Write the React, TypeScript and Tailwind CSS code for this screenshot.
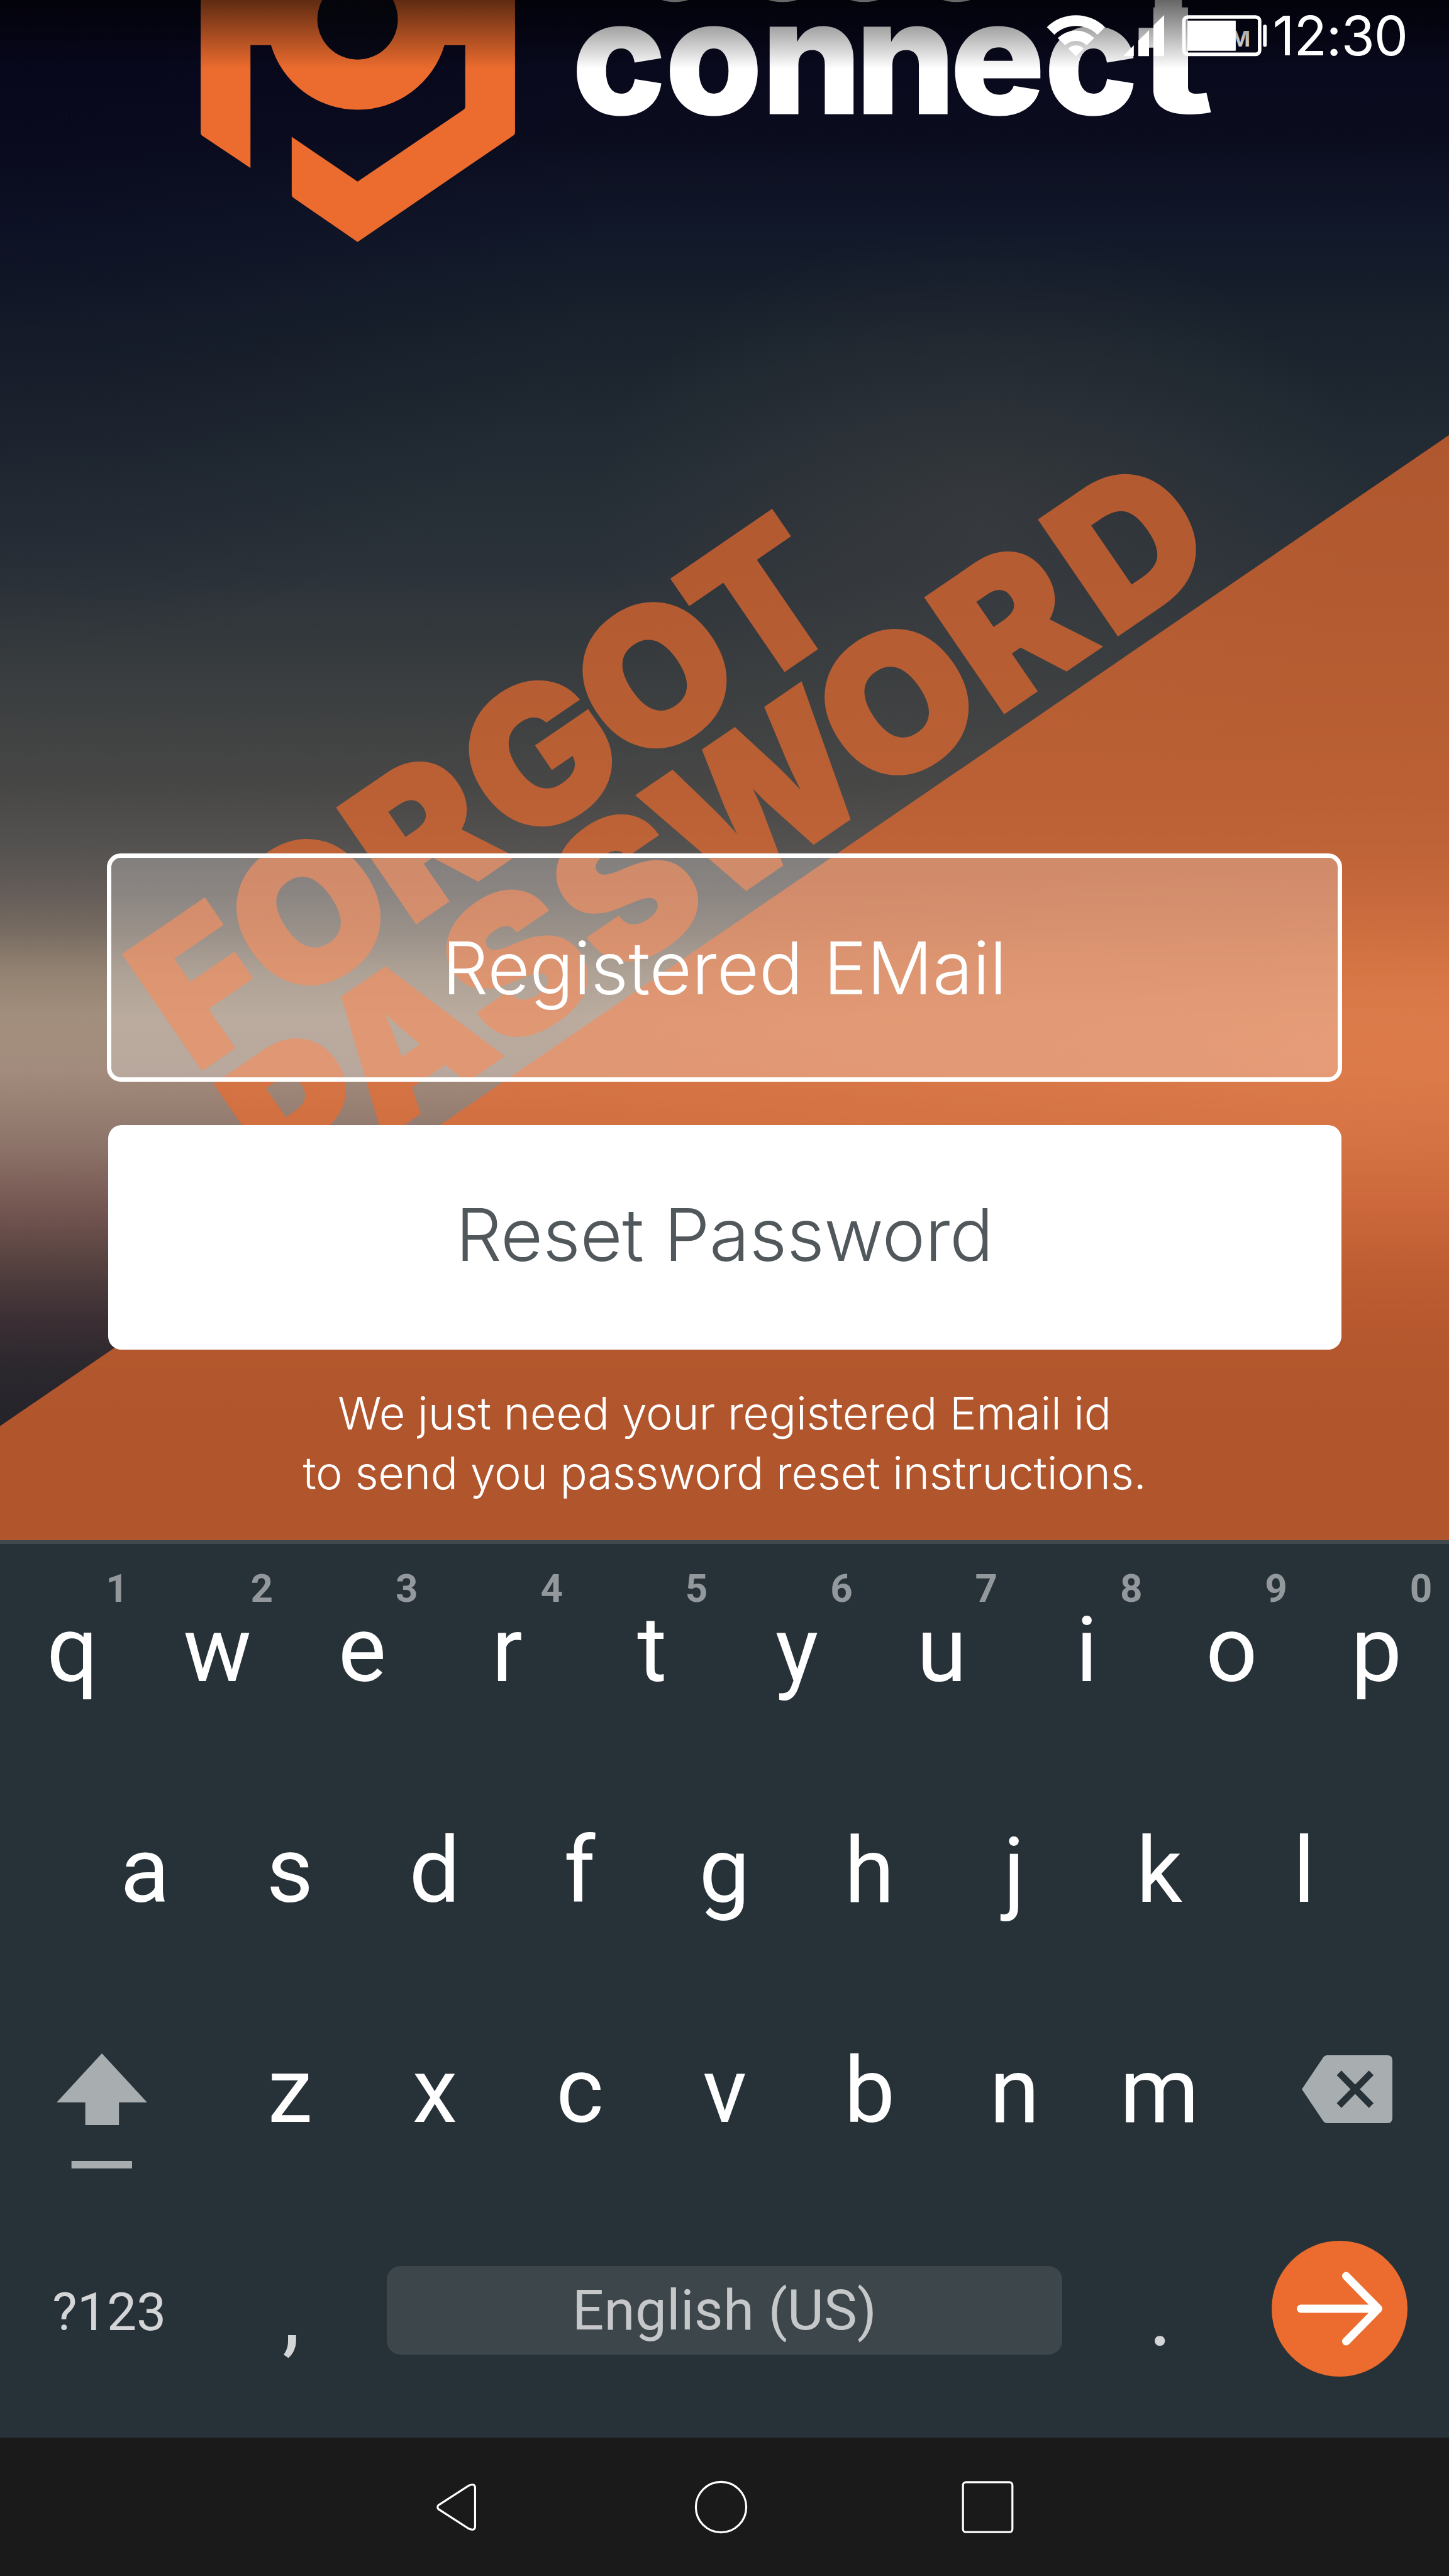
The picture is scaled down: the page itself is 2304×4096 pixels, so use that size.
import type { ReactNode } from "react";

const TOP_ROW: [string, string][] = [
  ["q", "1"], ["w", "2"], ["e", "3"], ["r", "4"], ["t", "5"],
  ["y", "6"], ["u", "7"], ["i", "8"], ["o", "9"], ["p", "0"],
];
const MIDDLE_ROW = ["a", "s", "d", "f", "g", "h", "j", "k", "l"];
const BOTTOM_ROW = ["z", "x", "c", "v", "b", "n", "m"];

function Backdrop() {
  return (
    <div className="absolute inset-0 overflow-hidden">
      <div className="absolute inset-0 bg-[linear-gradient(180deg,#06061a_0%,#0b0d1f_9%,#111829_15%,#1a232d_22%,#232c34_30%,#2b3239_37%,#393d3f_44%,#474746_51%,#545250_55%,#655d59_58%,#786c62_60.5%,#928171_63%,#a38f7e_66%,#a28b7c_69.500%,#8f766b_74%,#745651_78.5%,#564240_82%,#3c2f34_85.5%,#2a272d_89%,#24232a_93%,#25252b_100%)]" />
      <div className="absolute inset-0 bg-[radial-gradient(ellipse_620px_460px_at_1560px_820px,rgba(88,80,76,0.3),rgba(88,80,76,0)_100%)]" />
      <div className="absolute inset-0 bg-[radial-gradient(ellipse_1300px_330px_at_2150px_1690px,rgba(235,215,190,0.27),rgba(235,215,190,0)_100%)]" />
      <div className="absolute inset-0 bg-[radial-gradient(ellipse_1000px_800px_at_0px_250px,rgba(6,4,28,0.4),rgba(6,4,28,0)_100%)]" />
      <svg viewBox="0 0 2881 3062" className="absolute inset-0 h-full w-full" preserveAspectRatio="none">
        <g fill="#ec6b2e" opacity="0.7" fontFamily="Inter" fontWeight="900" fontSize="379">
          <path d="M2881 865V3062H0V2835Z" />
          <g stroke="#ec6b2e" strokeWidth="6">
            <text transform="translate(402.5 2125) rotate(-34.4)">
              <tspan x="-18">F</tspan>
              <tspan x="350" textAnchor="middle">O</tspan>
              <tspan x="498">R</tspan>
              <tspan x="905" textAnchor="middle">G</tspan>
              <tspan x="1184" textAnchor="middle">O</tspan>
              <tspan x="1441" textAnchor="middle">T</tspan>
            </text>
            <text transform="translate(585 2383) rotate(-34.4)">
              <tspan x="-18">P</tspan>
              <tspan x="359" textAnchor="middle">A</tspan>
              <tspan x="627" textAnchor="middle">S</tspan>
              <tspan x="892" textAnchor="middle">S</tspan>
              <tspan x="1213" textAnchor="middle">W</tspan>
              <tspan x="1546" textAnchor="middle">O</tspan>
              <tspan x="1694">R</tspan>
              <tspan x="1968">D</tspan>
            </text>
          </g>
        </g>
        <path fill="#ec6b2e" d="M399 0H1024V264Q1024 267 1021 269L711 481L583 393Q580 391 580 388V272L711 361L922 218Q925 216 925 212V89.8H883.7A180 180 0 0 1 538.8 89.8H498V334L401 269Q399 267 399 264Z" />
        <circle cx="711" cy="38.4" r="80" fill="#090918" />
        <g fill="#fff">
          <text y="225" x="1138 1323 1515 1702 1890 2077" fontFamily="Inter" fontWeight="800" fontSize="311" stroke="#fff" strokeWidth="4">connec</text>
          <text transform="translate(2260 225) scale(1.3 1)" fontFamily="Inter" fontWeight="800" fontSize="311">t</text>
          <rect x="2296" y="0" width="54" height="60" />
          <ellipse cx="1342" cy="-16" rx="44" ry="20" />
          <ellipse cx="1556" cy="-16" rx="48" ry="20" />
          <ellipse cx="1718" cy="-16" rx="46" ry="20" />
          <ellipse cx="1902" cy="-16" rx="46" ry="20" />
          <text x="2486" y="93" textAnchor="end" fontFamily="Inter" fontWeight="700" fontSize="43">TM</text>
        </g>
      </svg>
      <div className="absolute inset-x-0 top-0 h-[109px] bg-linear-to-b from-black/60 to-black/0" />
    </div>
  );
}

function StatusBar() {
  return (
    <div className="relative flex h-[110px] items-start justify-end pr-[66px] text-white">
      <svg viewBox="2070 20 456 102" className="mr-[2px] mt-[16px] h-[81.6px] w-[364.7px] shrink-0" fill="#fff">
        <path d="M2079.500 54A82 82 0 0 1 2195 54L2180 69A61 61 0 0 0 2094.500 69Z" />
        <path d="M2101 75.500A52 52 0 0 1 2173.600 75.500L2158.500 90A30 30 0 0 0 2116 90Z" />
        <path d="M2122 96.500A22 22 0 0 1 2152.500 96.500L2137.300 111.500Z" />
        <path d="M2231.500 111.500L2252.300 90V111.500Z" />
        <path d="M2261.300 111.500V81L2282.600 60V111.500Z" />
        <path d="M2291.300 111.500V51L2312.600 30V111.500Z" />
        <rect x="2352" y="33.700" width="150.500" height="74.300" rx="8" fill="none" stroke="#fff" strokeWidth="7" />
        <rect x="2359" y="41" width="96" height="60" rx="1" />
        <rect x="2509.300" y="49" width="7.300" height="44" rx="3.600" />
      </svg>
      <span className="mt-[5px] text-[86px] leading-[104px] tracking-[-1px]">12:30</span>
    </div>
  );
}

function Key({ children, hint }: { children: ReactNode; hint?: string }) {
  return (
    <div className="relative flex w-[230.4px] shrink-0 justify-center text-[144px] leading-[168px] text-white">
      {hint && (
        <span className="absolute left-[161px] top-[-50px] w-[50px] text-center text-[62px] font-bold leading-[72px] text-[#93989c]">
          {hint}
        </span>
      )}
      {children}
    </div>
  );
}

function Keyboard() {
  return (
    <div className="flex h-[1427px] flex-col border-t-[6px] border-[#3f494d] bg-[#273238] font-['Roboto']">
      <div className="flex h-[351px] pt-[85px]">
        {TOP_ROW.map(([letter, digit]) => (
          <Key key={letter} hint={digit}>{letter}</Key>
        ))}
      </div>
      <div className="flex h-[351px] justify-center pt-[85px]">
        {MIDDLE_ROW.map((letter) => (
          <Key key={letter}>{letter}</Key>
        ))}
      </div>
      <div className="flex h-[351px] pt-[84px]">
        <div className="w-[346px] shrink-0 pl-[90px]">
          <svg viewBox="113 4082 180 229" className="mt-[24px] h-[183px] w-[144px]" fill="#a8adb0">
            <path d="M203 4082L293 4179.500H237V4224.500H170V4179.500H113Z" />
            <rect x="142.500" y="4296" width="120.500" height="15" />
          </svg>
        </div>
        {BOTTOM_ROW.map((letter) => (
          <Key key={letter}>{letter}</Key>
        ))}
        <svg viewBox="2588 4086 180 135" className="ml-[111px] mt-[27px] h-[108px] w-[144px] shrink-0">
          <path d="M2588 4153.500L2630 4091Q2633 4086 2639 4086H2758Q2768 4086 2768 4096V4211Q2768 4221 2758 4221H2639Q2633 4221 2630 4216Z" fill="#a8adb0" />
          <path d="M2662 4121L2726 4186M2726 4121L2662 4186" stroke="#273238" strokeWidth="13" />
        </svg>
      </div>
      <div className="flex h-[368px] text-[#d4d5d7]">
        <span className="ml-[83px] mt-[119px] w-[346px] shrink-0 text-[84px] leading-[100px]">?123</span>
        <span className="mt-[88px] w-[186px] shrink-0 pl-[20px] text-[144px] leading-[168px]">,</span>
        <div className="mt-[95px] flex h-[141px] w-[1074px] shrink-0 items-center justify-center rounded-[22px] bg-[#3c464b] text-[89px] leading-[100px] tracking-[0.2px] text-[#c5c7c9]">
          English (US)
        </div>
        <span className="mt-[88px] w-[333px] shrink-0 pl-[137px] text-[144px] leading-[168px]">.</span>
        <svg viewBox="2528 4455 270 270" className="mt-[55px] h-[216px] w-[216px] shrink-0">
          <circle cx="2663" cy="4590" r="135" fill="#ec6b2e" />
          <path d="M2586 4590H2738M2676 4525L2740 4590L2676 4655" fill="none" stroke="#fff" strokeWidth="16" strokeLinecap="round" strokeLinejoin="round" />
        </svg>
      </div>
    </div>
  );
}

function NavigationBar() {
  return (
    <div className="flex h-[220px] items-center bg-[#1a1a1a]">
      <svg viewBox="864 4932 86 104" className="ml-[691px] h-[83px] w-[69px]" fill="none" stroke="#fff" strokeWidth="4">
        <path d="M871.500 4980L932 4941Q944 4936 944.500 4945V5023Q944 5032 932 5027L871.500 4988Q868 4984 871.500 4980Z" />
      </svg>
      <svg viewBox="1380 4931 106 106" className="ml-[344px] h-[85px] w-[85px]" fill="none" stroke="#fff" strokeWidth="4">
        <circle cx="1433" cy="4984" r="50" />
      </svg>
      <svg viewBox="1911 4931 106 106" className="ml-[339px] h-[85px] w-[85px]" fill="none" stroke="#fff" strokeWidth="4">
        <rect x="1915" y="4934.500" width="98" height="99" rx="6" />
      </svg>
    </div>
  );
}

export default function App() {
  return (
    <div className="flex h-[4096px] w-[2304px] flex-col overflow-hidden bg-black font-['Inter']">
      <div className="relative flex h-[2449px] shrink-0 flex-col overflow-hidden">
        <Backdrop />
        <StatusBar />
        <form className="relative mt-[1247px] flex flex-col items-center font-light">
          <div className="flex h-[363px] w-[1964px] items-center justify-center rounded-[22px] border-[7px] border-white bg-white/25 bg-clip-padding text-[116px] leading-[140px] text-white">
            Registered EMail
          </div>
          <button type="button" className="mt-[69px] flex h-[357px] w-[1961px] items-center justify-center rounded-[21px] bg-white pb-[9px] text-[116px] leading-[140px] tracking-[-0.4px] text-[#51585c]">
            Reset Password
          </button>
          <p className="mt-[53px] text-center text-[72px] leading-[95px] tracking-[-0.3px] text-white">
            We just need your registered Email id
            <br />
            to send you password reset instructions.
          </p>
        </form>
      </div>
      <Keyboard />
      <NavigationBar />
    </div>
  );
}
